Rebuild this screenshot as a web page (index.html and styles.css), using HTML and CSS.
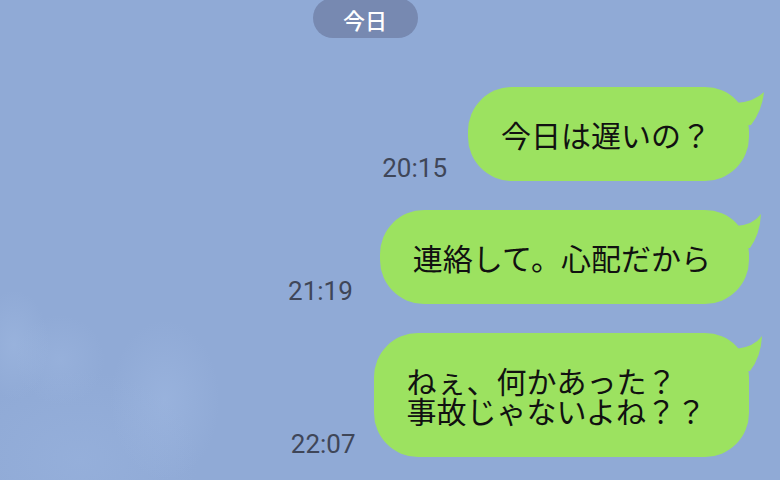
FILE: index.html
```html
<!DOCTYPE html>
<html lang="ja">
<head>
<meta charset="utf-8">
<title>トーク</title>
<link rel="stylesheet" href="styles.css">
</head>
<body>
<div class="chat">
  <div class="date-row"><span class="date-pill">今日</span></div>
  <div class="messages">
    <div class="msg">
      <span class="time time--mid">20:15</span>
      <div class="bubble">今日は遅いの？<svg class="tail" viewBox="-15 0 35 45" width="35" height="45"><path d="M-13 16 Q5 15 15 5 Q13 24 2 38 L-13 38 Z"/></svg></div>
    </div>
    <div class="msg">
      <span class="time time--narrow">21:19</span>
      <div class="bubble">連絡して。心配だから<svg class="tail" viewBox="-15 0 35 45" width="35" height="45"><path d="M-13 16 Q4 15 12 4 Q11 24 1 38 L-13 38 Z"/></svg></div>
    </div>
    <div class="msg">
      <span class="time">22:07</span>
      <div class="bubble bubble--wide">ねぇ、何かあった？<br>事故じゃないよね？？<svg class="tail" viewBox="-15 0 35 45" width="35" height="45"><path d="M-13 16 Q5 14 13 3 Q12 24 1 38 L-13 38 Z"/></svg></div>
    </div>
  </div>
</div>
</body>
</html>
```
FILE: styles.css
```css
html, body {
  margin: 0;
  padding: 0;
}
body {
  width: 780px;
  height: 480px;
  overflow: hidden;
  background-color: #90aad6;
  background-image:
    radial-gradient(ellipse 35px 55px at 14px 345px, rgba(168,193,231,0.35), rgba(168,193,231,0) 100%),
    radial-gradient(ellipse 45px 45px at 60px 360px, rgba(165,190,230,0.3), rgba(165,190,230,0) 100%),
    radial-gradient(ellipse 55px 80px at 165px 400px, rgba(165,190,230,0.4), rgba(165,190,230,0) 100%),
    radial-gradient(ellipse 120px 90px at 80px 460px, rgba(160,186,228,0.3), rgba(160,186,228,0) 100%);
  font-family: "Noto Sans CJK JP", "Noto Sans", sans-serif;
}
.chat {
  display: flex;
  flex-direction: column;
}
.date-row {
  display: flex;
  justify-content: center;
  padding-right: 50px;
  margin-top: -2px;
}
.date-pill {
  display: flex;
  align-items: center;
  justify-content: center;
  width: 105px;
  height: 40px;
  border-radius: 20px;
  background: #7789b1;
  color: #ffffff;
  font-size: 22px;
  font-weight: 500;
  line-height: 1;
  padding-top: 2px;
  box-sizing: border-box;
}
.messages {
  display: flex;
  flex-direction: column;
  align-items: flex-end;
  gap: 29px;
  padding-right: 31px;
  margin-top: 49px;
}
.msg {
  display: flex;
  align-items: flex-end;
  gap: 18px;
}
.time {
  font-family: Roboto, "Liberation Sans", sans-serif;
  font-size: 26px;
  line-height: 25px;
  color: #3f4658;
}
.time--mid {
  margin-right: 3px;
}
.time--narrow {
  margin-right: 9px;
}
.bubble {
  position: relative;
  background: #9ce260;
  border-radius: 44px;
  padding: 32px 38px 32px 33px;
  font-size: 30px;
  line-height: 30px;
  color: #111111;
  white-space: nowrap;
}
.bubble--wide {
  padding-right: 43px;
}
.tail {
  position: absolute;
  top: 0;
  right: -20px;
  fill: #9ce260;
}
```
